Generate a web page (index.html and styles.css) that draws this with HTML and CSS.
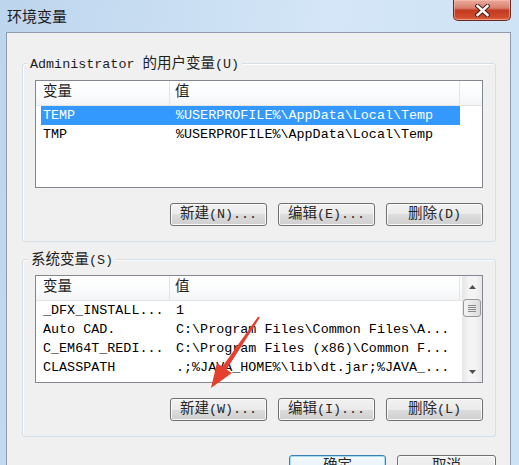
FILE: index.html
```html
<!DOCTYPE html>
<html>
<head>
<meta charset="utf-8">
<link rel="stylesheet" href="styles.css">
</head>
<body>
<div class="window">
  <div class="titlebar">
    <span class="title">环境变量</span>
    <div class="close">
      <svg width="15" height="13" viewBox="0 0 15 13">
        <path d="M2.5 2 L12.5 11 M12.5 2 L2.5 11" stroke="#4a2018" stroke-width="4.4" stroke-linecap="square"/>
        <path d="M2.5 2 L12.5 11 M12.5 2 L2.5 11" stroke="#ffffff" stroke-width="2.4" stroke-linecap="square"/>
      </svg>
    </div>
  </div>
  <div class="client">
    <section class="group g1">
      <div class="legend">Administrator <span class="zh">的用户变量</span>(U)</div>
      <div class="list">
        <div class="lmain">
          <div class="lhead">
            <div class="hc hc1"><span class="zh">变量</span></div>
            <div class="hc hc2"><span class="zh">值</span></div>
            <div class="hc hc3"></div>
          </div>
          <div class="row sel"><span class="c1">TEMP</span><span class="c2">%USERPROFILE%\AppData\Local\Temp</span></div>
          <div class="row"><span class="c1">TMP</span><span class="c2">%USERPROFILE%\AppData\Local\Temp</span></div>
        </div>
      </div>
      <div class="btns">
        <button class="btn"><span class="zh">新建</span>(N)...</button>
        <button class="btn"><span class="zh">编辑</span>(E)...</button>
        <button class="btn"><span class="zh">删除</span>(D)</button>
      </div>
    </section>

    <section class="group g2">
      <div class="legend"><span class="zh">系统变量</span>(S)</div>
      <div class="list">
        <div class="lmain">
          <div class="lhead">
            <div class="hc hc1"><span class="zh">变量</span></div>
            <div class="hc hc2"><span class="zh">值</span></div>
            <div class="hc hc3"></div>
          </div>
          <div class="row"><span class="c1">_DFX_INSTALL...</span><span class="c2">1</span></div>
          <div class="row"><span class="c1">Auto CAD.</span><span class="c2">C:\Program Files\Common Files\A...</span></div>
          <div class="row"><span class="c1">C_EM64T_REDI...</span><span class="c2">C:\Program Files (x86)\Common F...</span></div>
          <div class="row"><span class="c1">CLASSPATH</span><span class="c2">.;%JAVA_HOME%\lib\dt.jar;%JAVA_...</span></div>
        </div>
        <div class="scroll">
          <div class="sarrow">
            <svg width="7" height="4" viewBox="0 0 7 4"><path d="M0 4 L3.5 0 L7 4 Z" fill="#4f4f4f"/></svg>
          </div>
          <div class="thumb">
            <svg width="8" height="7" viewBox="0 0 8 7"><path d="M0 0.5 H8 M0 2.5 H8 M0 4.5 H8 M0 6.5 H8" stroke="#8a8a8a" stroke-width="1"/></svg>
          </div>
          <div class="track"></div>
          <div class="sarrow">
            <svg width="7" height="4" viewBox="0 0 7 4"><path d="M0 0 L7 0 L3.5 4 Z" fill="#4f4f4f"/></svg>
          </div>
        </div>
      </div>
      <div class="btns">
        <button class="btn"><span class="zh">新建</span>(W)...</button>
        <button class="btn"><span class="zh">编辑</span>(I)...</button>
        <button class="btn"><span class="zh">删除</span>(L)</button>
      </div>
    </section>

    <div class="footer">
      <button class="btn btn-default"><span class="zh">确定</span></button>
      <button class="btn btn-wide"><span class="zh">取消</span></button>
    </div>
  </div>
</div>
<svg class="arrow" width="519" height="465" viewBox="0 0 519 465">
  <polygon points="259.8,317.6 226.5,369.5 231.9,373.1 211,388 216.9,363.1 222.3,366.7 258.2,316.4" fill="#e5402e"/>
</svg>
</body>
</html>
```

FILE: styles.css
```css
html, body {
  margin: 0;
  padding: 0;
}
body {
  width: 519px;
  height: 465px;
  overflow: hidden;
  position: relative;
  font-family: "Liberation Mono", "Noto Sans CJK SC", monospace;
  font-size: 13.4px;
  color: #000;
}
.window {
  width: 519px;
  height: 465px;
  background: linear-gradient(100deg, #bdd5ed 0%, #d4e6f7 55%, #cde2f5 100%);
}
.titlebar {
  height: 32px;
  display: flex;
  align-items: flex-start;
  padding: 0 8px 0 7px;
  box-sizing: border-box;
}
.title {
  margin-top: 6px;
  font-family: "Noto Sans CJK SC", sans-serif;
  font-size: 15px;
  line-height: 20px;
  color: #1c1c1c;
}
.close {
  margin-left: auto;
  width: 58px;
  height: 21px;
  box-sizing: border-box;
  border: 1px solid #6a2a1f;
  border-top: none;
  border-radius: 0 0 5px 5px;
  background: linear-gradient(180deg, #e9ab9c 0%, #d8806e 40%, #c23b22 52%, #cf4a2b 85%, #dc6a45 100%);
  box-shadow: inset 0 0 0 1px rgba(255, 200, 190, 0.5);
  display: flex;
  align-items: center;
  justify-content: center;
}
.client {
  margin-left: 6px;
  width: 505px;
  height: 433px;
  box-sizing: border-box;
  border: 1px solid #8f9cab;
  border-bottom: none;
  background: #f0f0f0;
  padding-top: 30px;
}
.group {
  margin: 0 14px 0 15px;
  border: 1px solid #d5dfe5;
  border-radius: 3px;
  box-shadow: inset 1px 1px 0 #fdfdfd;
  padding: 0 12px 15px;
}
.g2 {
  margin-top: 17px;
}
.legend {
  width: max-content;
  height: 17px;
  line-height: 17px;
  margin: -9px 0 0 -8px;
  padding: 0 3px;
  background: #f0f0f0;
  color: #1e1e1e;
  white-space: nowrap;
}
.g2 .legend {
  margin-left: -7px;
}
.zh {
  font-family: "Noto Sans CJK SC", sans-serif;
  font-size: 14.5px;
  line-height: 1;
}
.list {
  margin-top: 8px;
  height: 108px;
  box-sizing: border-box;
  border: 1px solid #828790;
  background: #fff;
  display: flex;
  overflow: hidden;
}
.g2 .list {
  margin-top: 7px;
}
.lmain {
  flex: 1;
  display: flex;
  flex-direction: column;
  overflow: hidden;
}
.lhead {
  height: 25px;
  flex: none;
  box-sizing: border-box;
  display: grid;
  grid-template-columns: 134px 290px 1fr;
  border-bottom: 1px solid #e5e5e5;
  background: linear-gradient(180deg, #ffffff 0%, #fafbfc 60%, #f3f4f6 100%);
}
.hc {
  height: 24px;
  line-height: 24px;
  border-right: 1px solid #e3e5e8;
  color: #1e1e1e;
}
.hc1 {
  padding-left: 7px;
}
.hc2 {
  padding-left: 5px;
}
.hc3 {
  border-right: none;
}
.row {
  height: 19px;
  flex: none;
  line-height: 19px;
  margin-left: 5px;
  width: 419px;
  display: grid;
  grid-template-columns: 129px 290px;
  white-space: nowrap;
  color: #000;
}
.row .c1 {
  padding-left: 2px;
  overflow: hidden;
}
.row .c2 {
  padding-left: 6px;
  overflow: hidden;
}
.row.sel {
  background: #3399ff;
  color: #fff;
}
.scroll {
  width: 20px;
  flex: none;
  display: flex;
  flex-direction: column;
  background: linear-gradient(90deg, #e6e6e6 0%, #f4f4f4 35%, #f4f4f4 65%, #e8e8e8 100%);
}
.sarrow {
  height: 21px;
  flex: none;
  display: flex;
  align-items: center;
  justify-content: center;
}
.thumb {
  margin: 2px 1px 0;
  height: 18px;
  flex: none;
  box-sizing: border-box;
  border: 1px solid #999;
  border-radius: 3px;
  background: linear-gradient(90deg, #f3f3f3 0%, #e9e9e9 50%, #dadada 100%);
  display: flex;
  align-items: center;
  justify-content: center;
}
.track {
  flex: 1;
}
.btns {
  display: flex;
  justify-content: flex-end;
  gap: 11px;
  margin-top: 15px;
}
.btn {
  width: 97px;
  height: 23px;
  box-sizing: border-box;
  padding: 0;
  border: 1px solid #707070;
  border-radius: 3px;
  background: linear-gradient(180deg, #f2f2f2 0%, #ebebeb 50%, #dddddd 50%, #cfcfcf 100%);
  box-shadow: inset 0 0 0 1px #fafafa;
  font-family: "Liberation Mono", "Noto Sans CJK SC", monospace;
  font-size: 13.4px;
  line-height: 21px;
  color: #262626;
  text-align: center;
  white-space: nowrap;
}
.footer {
  display: flex;
  justify-content: flex-end;
  gap: 11px;
  margin-top: 18px;
  padding-right: 14px;
}
.btn-default {
  border-color: #3c7fb1;
  box-shadow: inset 0 0 0 1px #a8dcf5;
  background: linear-gradient(180deg, #f4f9fd 0%, #e9f4fb 50%, #d9edf9 50%, #cbe5f6 100%);
}
.btn-wide {
  width: 99px;
}
.arrow {
  position: absolute;
  left: 0;
  top: 0;
  pointer-events: none;
}
```
